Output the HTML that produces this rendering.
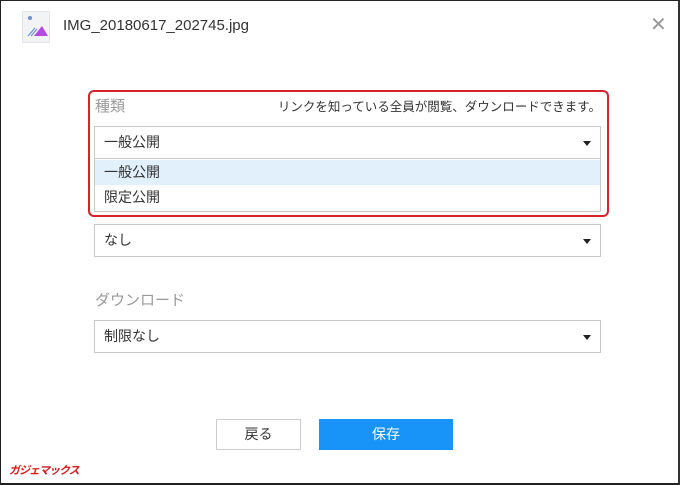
<!DOCTYPE html>
<html><head><meta charset="utf-8"><style>
*{margin:0;padding:0;box-sizing:border-box}
body{width:680px;height:485px;background:#fff;position:relative;overflow:hidden;font-family:"Liberation Sans","Noto Sans CJK JP",sans-serif;color:#333}
.frame{position:absolute;left:0;top:0;width:680px;height:485px;border:1px solid #222;border-right:2px solid #333;border-bottom:2px solid #222}
.a{position:absolute}
.sel{position:absolute;left:94px;width:507px;height:33px;border:1px solid #c8c8c8;background:#fff;font-size:14px;padding-left:9px;line-height:31px;color:#333}
.sel:after{content:"";position:absolute;right:9px;top:14px;border-left:4px solid transparent;border-right:4px solid transparent;border-top:5px solid #222}
</style></head><body>
<div class="frame"></div>
<div class="a" style="left:22px;top:11px;width:28px;height:32px;background:#f2f3f5;border:1px solid #e4e4e8"></div>
<svg class="a" style="left:26px;top:14px" width="24" height="26" viewBox="0 0 24 26">
<circle cx="4" cy="4" r="2" fill="#6a8fd8"/>
<polygon points="8,22 16,12 22,22" fill="#b548e0"/>
<line x1="2" y1="22" x2="9" y2="14" stroke="#6a8fd8" stroke-width="1.2"/>
<line x1="5" y1="22" x2="11" y2="15" stroke="#6a8fd8" stroke-width="1.2"/>
</svg>
<div class="a" style="left:63px;top:17px;font-size:15px;color:#333">IMG_20180617_202745.jpg</div>
<div class="a" style="left:650px;top:12px;font-size:20px;color:#999">✕</div>

<div class="a" style="left:88px;top:90px;width:521px;height:127px;border:2px solid #d8232a;border-radius:6px"></div>
<div class="a" style="left:95px;top:95px;font-size:15px;color:#999">種類</div>
<div class="a" style="right:79px;top:96px;font-size:12.5px;color:#333">リンクを知っている全員が閲覧、ダウンロードできます。</div>
<div class="sel" style="top:126px">一般公開</div>
<div class="a" style="left:94px;top:159px;width:507px;height:53px;border:1px solid #c8c8c8;border-top:none;background:#fff"></div>
<div class="a" style="left:95px;top:160px;width:505px;height:25px;background:#e2f0fb;font-size:14px;padding-left:9px;line-height:25px">一般公開</div>
<div class="a" style="left:95px;top:185px;width:505px;height:25px;font-size:14px;padding-left:9px;line-height:25px">限定公開</div>

<div class="sel" style="top:224px">なし</div>
<div class="a" style="left:95px;top:289px;font-size:15px;color:#999">ダウンロード</div>
<div class="sel" style="top:320px">制限なし</div>

<div class="a" style="left:216px;top:419px;width:85px;height:31px;border:1px solid #ccc;text-align:center;line-height:29px;font-size:14px">戻る</div>
<div class="a" style="left:319px;top:419px;width:134px;height:31px;background:#1893f8;color:#fff;text-align:center;line-height:31px;font-size:14px">保存</div>
<div class="a" style="left:9px;top:462px;font-size:11px;font-weight:bold;font-style:italic;color:#d81a1a;letter-spacing:-1px">ガジェマックス</div>
</body></html>
